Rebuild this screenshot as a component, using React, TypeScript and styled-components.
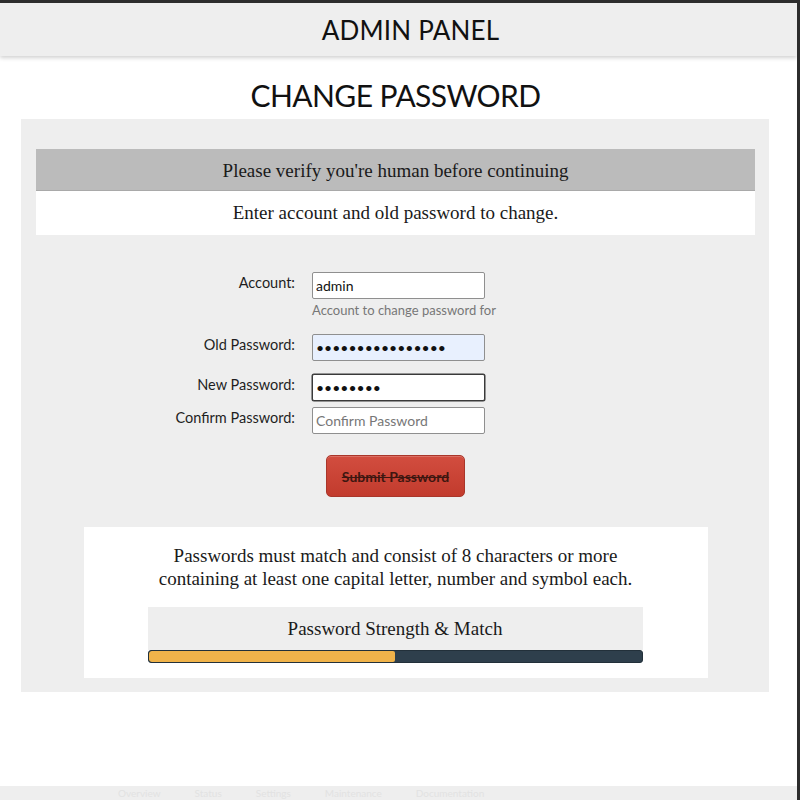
import {FC} from "react";
import styled, {createGlobalStyle} from "styled-components";

const GlobalStyle = createGlobalStyle`
  html, body {
    margin: 0;
    padding: 0;
    background: #fff;
  }
  * {
    box-sizing: border-box;
  }
`;

const Frame = styled.div`
  display: flex;
  flex-direction: column;
  height: 800px;
  overflow: hidden;
  border-top: 3px solid #2d2d2d;
  border-right: 3px solid #2d2d2d;
  font-family: Lato, "Liberation Sans", sans-serif;
  color: #111;
`;

const Header = styled.header`
  display: flex;
  align-items: center;
  justify-content: center;
  height: 53px;
  flex-shrink: 0;
  background: #eeeeee;
  box-shadow: 0 2px 4px rgba(0, 0, 0, 0.18);
  font-size: 26px;
  letter-spacing: 0.2px;
  padding-left: 24px;
  position: relative;
  z-index: 1;
`;

const Title = styled.h1`
  margin: 19px 0 4px;
  line-height: 40px;
  font-size: 30px;
  letter-spacing: -0.6px;
  font-weight: 400;
  text-align: center;
  padding-right: 6px;
`;

const Panel = styled.section`
  width: 748px;
  margin-left: 21px;
  background: #eeeeee;
  padding: 30px 14px 14px 15px;
`;

const Notice = styled.div<{ $tone: "grey" | "white" }>`
  display: flex;
  align-items: center;
  justify-content: center;
  height: ${p => (p.$tone === "grey" ? "42px" : "44px")};
  background: ${p => (p.$tone === "grey" ? "#bbbbbb" : "#ffffff")};
  border-bottom: ${p => (p.$tone === "grey" ? "1px solid #a9a9a9" : "none")};
  padding-top: ${p => (p.$tone === "grey" ? "2px" : "0")};
  font-family: "Liberation Serif", serif;
  font-size: 19px;
  color: #1a1a1a;
`;

const Form = styled.form`
  margin-top: 37px;
  display: flex;
  flex-direction: column;
  align-items: stretch;
`;

const Row = styled.div<{ $after: number }>`
  display: grid;
  grid-template-columns: 259px 173px;
  column-gap: 17px;
  margin-bottom: ${p => p.$after}px;
`;

const Label = styled.label`
  text-align: right;
  font-size: 14.5px;
  color: #1e1e1e;
  padding-top: 2px;
  white-space: nowrap;
`;

const Control = styled.div`
  display: flex;
  flex-direction: column;
`;

const Input = styled.input<{ $filled?: boolean; $focus?: boolean }>`
  width: 173px;
  height: 27px;
  padding: 0 3px;
  border: 1px solid ${p => (p.$focus ? "#3a3a3a" : "#8f8f8f")};
  border-radius: 2px;
  background: ${p => (p.$filled ? "#e8f0fe" : "#fff")};
  font-family: Lato, "Liberation Sans", sans-serif;
  font-size: 14px;
  color: #111;
  outline: none;
  box-shadow: ${p => (p.$focus ? "0 0 0 0.5px #3a3a3a" : "none")};

  &::placeholder {
    color: #777;
  }
`;

const Hint = styled.span`
  margin-top: 3px;
  font-size: 13px;
  color: #777;
  white-space: nowrap;
`;

const SubmitButton = styled.button`
  align-self: center;
  margin-top: 21px;
  width: 139px;
  height: 42px;
  border: 1px solid #a9362a;
  border-radius: 5px;
  background: linear-gradient(#d24d3f, #c23b2d);
  box-shadow: inset 0 1px 0 rgba(255, 255, 255, 0.2);
  font-family: Lato, "Liberation Sans", sans-serif;
  font-size: 14px;
  font-weight: 700;
  color: #3e1610;
  text-decoration: line-through;
`;

const Rules = styled.div`
  width: 624px;
  margin: 30px auto 0;
  background: #fff;
  padding: 17px 64px 15px;
  font-family: "Liberation Serif", serif;
  font-size: 19px;
  color: #1a1a1a;
`;

const RulesText = styled.p`
  margin: 0;
  line-height: 23px;
  text-align: center;
`;

const Strength = styled.div`
  margin-top: 17px;
  width: 495px;
`;

const StrengthLabel = styled.div`
  display: flex;
  align-items: center;
  justify-content: center;
  height: 43px;
  background: #eeeeee;
`;

const Track = styled.div`
  height: 13px;
  border-radius: 3px;
  background: #2e3f4c;
  overflow: hidden;
  border: 1px solid #22303a;
`;

const Fill = styled.div`
  height: 100%;
  background: #f0b34a;
  border-radius: 3px 2px 2px 3px;
`;

const Footer = styled.footer`
  margin-top: auto;
  height: 14px;
  flex-shrink: 0;
  background: #eeeeee;
  padding: 1px 0 0 118px;
  display: flex;
  gap: 34px;
  font-size: 10px;
  line-height: 12px;
  color: #e2e2e2;
`;

const App: FC = () => {
    const strength = 50;

    return (
        <>
            <GlobalStyle/>
            <Frame>
                <Header>ADMIN PANEL</Header>
                <Title>CHANGE PASSWORD</Title>
                <Panel>
                    <Notice $tone="grey">Please verify you're human before continuing</Notice>
                    <Notice $tone="white">Enter account and old password to change.</Notice>
                    <Form onSubmit={e => e.preventDefault()}>
                        <Row $after={16}>
                            <Label>Account:</Label>
                            <Control>
                                <Input type="text" defaultValue="admin"/>
                                <Hint>Account to change password for</Hint>
                            </Control>
                        </Row>
                        <Row $after={13}>
                            <Label>Old Password:</Label>
                            <Input type="password" defaultValue="oldpassword12345" $filled/>
                        </Row>
                        <Row $after={6}>
                            <Label>New Password:</Label>
                            <Input type="password" defaultValue="newpass1" $focus/>
                        </Row>
                        <Row $after={0}>
                            <Label>Confirm Password:</Label>
                            <Input type="password" placeholder="Confirm Password"/>
                        </Row>
                        <SubmitButton type="submit">Submit Password</SubmitButton>
                    </Form>
                    <Rules>
                        <RulesText>
                            Passwords must match and consist of 8 characters or more containing at least one capital
                            letter, number and symbol each.
                        </RulesText>
                        <Strength>
                            <StrengthLabel>Password Strength &amp; Match</StrengthLabel>
                            <Track>
                                <Fill style={{width: `${strength}%`}}/>
                            </Track>
                        </Strength>
                    </Rules>
                </Panel>
                <Footer>
                    <span>Overview</span>
                    <span>Status</span>
                    <span>Settings</span>
                    <span>Maintenance</span>
                    <span>Documentation</span>
                </Footer>
            </Frame>
        </>
    )
}

export default App;
